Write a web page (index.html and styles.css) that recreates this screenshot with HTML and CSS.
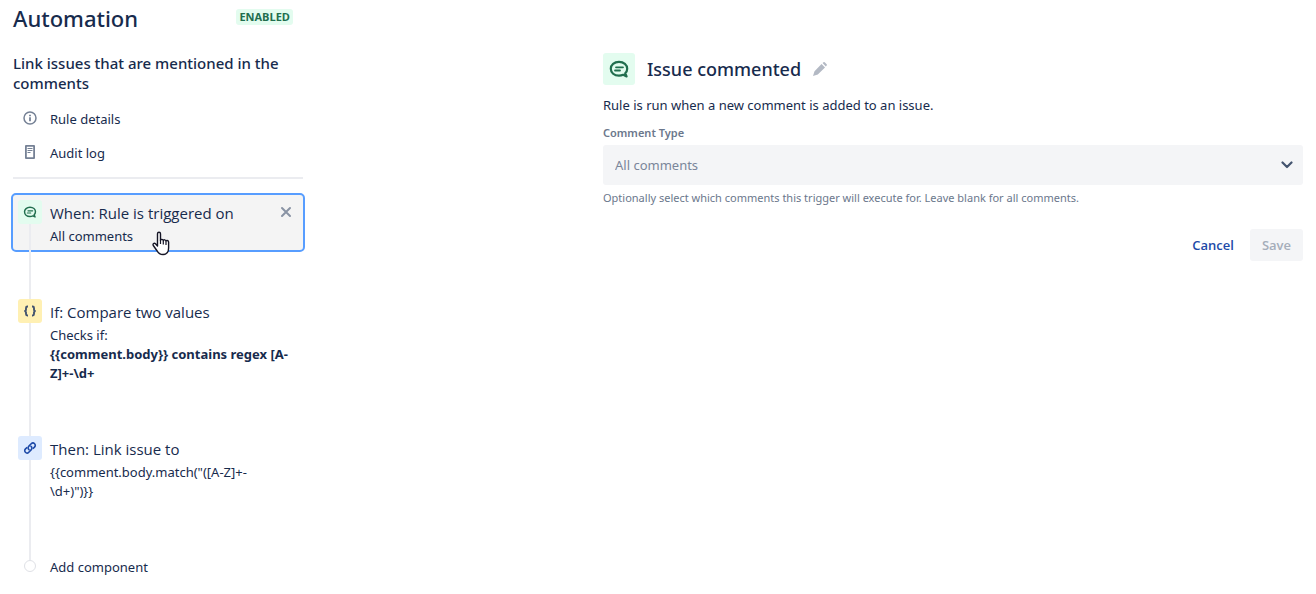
FILE: index.html
```html
<!DOCTYPE html>
<html lang="en">
<head>
<meta charset="utf-8">
<title>Automation</title>
<link rel="stylesheet" href="styles.css">
</head>
<body>
<svg width="0" height="0" class="defs" aria-hidden="true">
  <symbol id="comment" viewBox="0 0 24 24">
    <g fill="none" stroke="currentColor" stroke-width="2.2" stroke-linecap="round" stroke-linejoin="round">
      <path d="M16.200 17.800c-1.300.6-2.700.9-4.200.9-4.800 0-8.200-3-8.200-6.900s3.400-6.900 8.200-6.900 8.200 3 8.200 6.900c0 1.700-.7 3.300-2 4.500l1.400 3.100z"/>
      <path d="M9 10.300h7M8 13.500h5" stroke-width="1.800"/>
    </g>
  </symbol>
</svg>
<div class="page">
  <aside class="sidebar">
    <header class="head">
      <h1>Automation</h1>
      <span class="lozenge">ENABLED</span>
    </header>
    <h2 class="rule-name">Link issues that are mentioned in the comments</h2>
    <nav class="links">
      <a href="#details">
        <svg width="16" height="16" viewBox="0 0 16 16"><circle cx="8" cy="7" r="6" fill="none" stroke="currentColor" stroke-width="1.500"/><path d="M7.100 6.200h1.800v4H7.100zM7.100 3.700h1.800v1.600H7.100z" fill="currentColor"/></svg>
        Rule details
      </a>
      <a href="#log">
        <svg width="16" height="16" viewBox="0 0 16 16"><path d="M4 0h8a1 1 0 0 1 1 1v12a1 1 0 0 1-1 1H4a1 1 0 0 1-1-1V1a1 1 0 0 1 1-1zm.8 1.800v10.400h6.400V1.800z" fill="currentColor" fill-rule="evenodd"/><path d="M5.500 3.500h5M5.500 5.500h5M5.500 7.500h3" stroke="currentColor" stroke-width="1.200"/></svg>
        Audit log
      </a>
    </nav>
    <ol class="steps">
      <li class="step">
        <div class="rail">
          <span class="icon green"><svg width="16" height="16"><use href="#comment"/></svg></span>
          <span class="line"></span>
        </div>
        <div class="card selected">
          <h3>When: Rule is triggered on</h3>
          <p>All comments</p>
        </div>
        <button class="close" type="button" aria-label="Remove trigger">
          <svg width="12" height="12" viewBox="0 0 12 12"><path d="M2 2l8 8M10 2l-8 8" stroke="currentColor" stroke-width="2" stroke-linecap="round"/></svg>
        </button>
        <svg class="pointer" width="18" height="25" viewBox="0 0 18 25" aria-hidden="true"><path d="M5.500 15V2.700a1.500 1.500 0 0 1 3 0V9.500c0-1.500 2.800-1.500 2.800.2 0-1.300 2.700-1.200 2.700.5 0-1.200 2.600-1 2.600.8v6c0 4-2.100 6.500-5.600 6.500-3 0-4.600-1.200-5.800-3.500L1.300 14.500c-.9-1.900.9-3 2.200-1.700z" fill="#fff" stroke="#151525" stroke-width="1.400" stroke-linejoin="round"/><path d="M8.500 9v4M11.300 10v3.500M14 10.500V14" stroke="#151525" stroke-width="1.200"/></svg>
      </li>
      <li class="step">
        <div class="rail">
          <span class="icon yellow"><svg width="16" height="16" viewBox="0 0 16 16"><path d="M6 3.500h-.6Q4 3.500 4 5v1.400Q4 8 2.300 8 4 8 4 9.600V11q0 1.500 1.400 1.500H6M10 3.500h.6Q12 3.500 12 5v1.400Q12 8 13.700 8 12 8 12 9.600V11q0 1.500-1.400 1.500H10" fill="none" stroke="currentColor" stroke-width="1.900"/></svg></span>
          <span class="line"></span>
        </div>
        <div class="card">
          <h3>If: Compare two values</h3>
          <p>Checks if:</p>
          <p><strong>{{comment.body}} contains regex [A-<wbr>Z]+-\d+</strong></p>
        </div>
      </li>
      <li class="step">
        <div class="rail">
          <span class="icon blue"><svg width="16" height="16" viewBox="0 0 16 16"><g fill="none" stroke="currentColor" stroke-width="1.600" stroke-linecap="round"><path d="M7 9.700c-1.200-1-1.200-2.500-.1-3.600l2.300-2.300c1-1 2.500-1 3.400-.1s.9 2.400-.1 3.400l-1.200 1.200"/><path d="M9 6.300c1.200 1 1.200 2.500.1 3.600l-2.300 2.300c-1 1-2.500 1-3.400.1s-.9-2.400.1-3.400l1.200-1.200"/></g></svg></span>
          <span class="line"></span>
        </div>
        <div class="card">
          <h3>Then: Link issue to</h3>
          <p>{{comment.body.match("([A-Z]+-<br>\d+)")}}</p>
        </div>
      </li>
      <li class="add">
        <span class="add-rail"><span class="stub"></span><span class="dot"></span></span>
        <button type="button">Add component</button>
      </li>
    </ol>
  </aside>
  <main class="panel">
    <header class="panel-head">
      <span class="icon large green"><svg width="24" height="24"><use href="#comment"/></svg></span>
      <h2>Issue commented</h2>
      <button class="edit" type="button" aria-label="Rename">
        <svg width="14" height="14" viewBox="0 0 12 12"><path d="M7.300 1.700l3 3-6.200 6L0 12l1.300-4.100zM8.200.9l.8-.6q.5-.4 1 0l1.700 1.700q.4.500 0 1l-.7.800z" fill="currentColor"/></svg>
      </button>
    </header>
    <p class="about">Rule is run when a new comment is added to an issue.</p>
    <form>
      <label for="type">Comment Type</label>
      <div class="select">
        <select id="type"><option>All comments</option></select>
        <svg width="12" height="8" viewBox="0 0 12 8" aria-hidden="true"><path d="M1.500 1.500L6 6l4.500-4.500" fill="none" stroke="currentColor" stroke-width="2.200" stroke-linecap="round" stroke-linejoin="round"/></svg>
      </div>
      <p class="hint">Optionally select which comments this trigger will execute for. Leave blank for all comments.</p>
      <div class="actions">
        <button class="cancel" type="button">Cancel</button>
        <button class="save" type="submit" disabled>Save</button>
      </div>
    </form>
  </main>
</div>
</body>
</html>
```

FILE: styles.css
```css
* { box-sizing: border-box; }
body {
  margin: 0;
  background: #fff;
  color: #172b4d;
  font: 13px/20px "Noto Sans", "Open Sans", sans-serif;
}
h1, h2, h3, p, ol { margin: 0; padding: 0; font-weight: 400; }
ol { list-style: none; }
svg { display: block; flex: none; }
button { border: 0; padding: 0; background: none; color: inherit; font: inherit; cursor: pointer; }
.defs { position: absolute; }

.page { display: flex; gap: 300px; padding: 4px 13px 16px; }
.sidebar { flex: none; width: 290px; }

.head { display: flex; align-items: flex-start; justify-content: space-between; padding-right: 10px; }
.head h1 { font-size: 22px; line-height: 28px; font-weight: 500; }
.lozenge {
  margin-top: 5px;
  padding: 0 3px;
  border-radius: 3px;
  background: #e3fcef;
  color: #216e4e;
  font-family: "Open Sans", sans-serif;
  font-size: 11px;
  line-height: 16px;
  font-weight: 700;
}
.rule-name { margin-top: 21px; font-size: 15px; line-height: 20px; font-weight: 500; }

.links {
  display: grid;
  gap: 14px;
  padding: 16px 9px 14px;
  border-bottom: 2px solid #ebecf0;
}
.links a { display: flex; align-items: center; gap: 12px; color: inherit; text-decoration: none; }
.links svg { color: #758195; }

.steps { margin: 14px -2px 0; }
.step {
  position: relative;
  display: grid;
  grid-template-columns: 38px 1fr;
  grid-template-rows: auto 40px;
}
.rail {
  grid-area: 1 / 1 / 3 / 2;
  z-index: 1;
  display: flex;
  flex-direction: column;
  align-items: center;
  padding-top: 7px;
  pointer-events: none;
}
.line { flex: 1; width: 2px; margin-bottom: -7px; background: #ebecf0; }
.card {
  grid-area: 1 / 1 / 2 / 3;
  padding: 5px 5px 4px 37px;
  border: 2px solid transparent;
  border-radius: 5px;
  line-height: 19px;
}
.card.selected { border-color: #579dff; background: #f4f4f4; }
.card h3 { font-family: "Open Sans", sans-serif; font-size: 15px; line-height: 27px; }
.close { position: absolute; top: 13px; right: 13px; color: #8993a4; }
.pointer { position: absolute; top: 38px; left: 141px; z-index: 2; pointer-events: none; }

.icon { display: grid; place-items: center; width: 24px; height: 24px; border-radius: 3px; }
.icon.large { width: 32px; height: 32px; }
.green { background: #e3fcef; color: #216e4e; }
.yellow { background: #fff0b3; color: #44546f; }
.blue { background: #deebff; color: #1d4aa8; }

.add { display: flex; align-items: flex-start; gap: 1px; padding-top: 7px; }
.add-rail { display: flex; flex-direction: column; align-items: center; width: 38px; }
.stub { width: 2px; height: 6px; background: #ebecf0; }
.dot { width: 12px; height: 12px; border: 1px solid #dfe1e6; border-radius: 50%; background: #fff; }
.add button { margin-top: 3px; }

.panel { flex: 1; min-width: 0; padding-top: 49px; }
.panel-head { display: flex; align-items: center; gap: 12px; }
.panel-head h2 { font-size: 18px; line-height: 24px; font-weight: 500; }
.edit { color: #b3b9c4; }
.about { margin-top: 10px; }
label { display: block; margin-top: 10px; color: #6b778c; font-size: 11px; line-height: 16px; font-weight: 600; }
.select { display: grid; align-items: center; margin-top: 4px; }
.select > * { grid-area: 1 / 1; }
.select svg { justify-self: end; margin-right: 10px; color: #44546f; pointer-events: none; }
select {
  appearance: none;
  width: 100%;
  height: 40px;
  padding: 0 12px;
  border: 0;
  border-radius: 3px;
  background: #f4f5f7;
  color: #7a869a;
  font: inherit;
}
.hint { margin-top: 5px; color: #6b778c; font-size: 11px; line-height: 16px; }
.actions { display: flex; justify-content: flex-end; gap: 4px; margin-top: 23px; }
.actions button { height: 32px; padding: 0 12px; border-radius: 3px; font-family: "Open Sans", sans-serif; font-weight: 600; }
.cancel { color: #1d4aa8; }
.actions .save { background: #f4f5f7; color: #a5adba; cursor: default; }
```
